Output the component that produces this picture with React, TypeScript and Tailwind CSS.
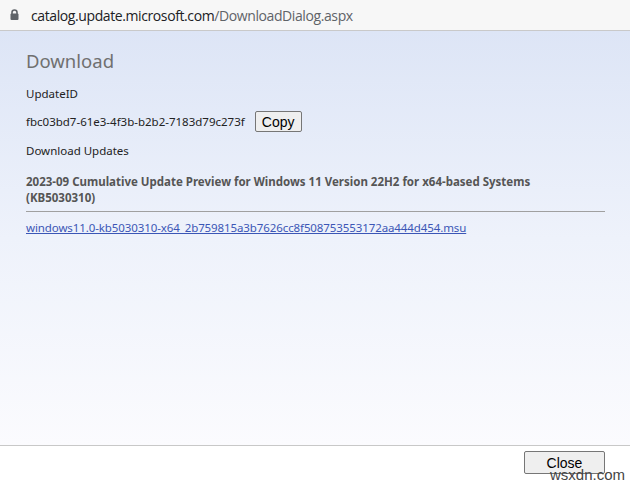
import React from "react";

export default function App() {
  const seg = { fontFamily: '"Noto Sans", "Open Sans", sans-serif' };
  return (
    <div className="w-[630px] h-[484px] flex flex-col overflow-hidden bg-white relative" style={seg}>
      <div className="h-[31px] shrink-0 flex items-center bg-[#f7f7f7] border-b border-[#c9c9c9] pl-[10px]">
        <svg width="9" height="11" viewBox="0 0 9 11" className="mr-[12px] mt-[-1px]">
          <path d="M2 5V3.5a2.5 2.5 0 0 1 5 0V5" fill="none" stroke="#5f6368" strokeWidth="1.6" />
          <rect x="0.5" y="4.5" width="8" height="6.5" rx="1" fill="#5f6368" />
        </svg>
        <span className="text-[14px] text-[#202124] tracking-[-0.4px]" style={{ fontFamily: '"Open Sans", "Noto Sans", sans-serif' }}>
          catalog.update.microsoft.com<span className="text-[#5f6368]">/DownloadDialog.aspx</span>
        </span>
      </div>
      <div className="flex-1 flex flex-col bg-gradient-to-b from-[#dde5f6] via-[#eef2fb] to-[#fbfbfe] px-[26px] pt-[17px]">
        <div className="text-[18.5px] leading-[26px] text-[#707070]">Download</div>
        <div className="text-[11.5px] leading-[16px] text-[#222] mt-[12px]">UpdateID</div>
        <div className="flex items-center mt-[9px]">
          <span className="text-[11.5px] leading-[16px] text-[#222]">fbc03bd7-61e3-4f3b-b2b2-7183d79c273f</span>
          <button
            className="ml-[10px] w-[47px] h-[21px] text-[14px] leading-[18px] text-black bg-[#efefef] border border-[#767676] rounded-[2px]"
            style={{ fontFamily: '"Liberation Sans", Arial, sans-serif' }}
          >
            Copy
          </button>
        </div>
        <div className="text-[11.5px] leading-[16px] text-[#222] mt-[11px]">Download Updates</div>
        <div className="text-[11.5px] leading-[16px] font-bold text-[#555] mt-[15px]">
          2023-09 Cumulative Update Preview for Windows 11 Version 22H2 for x64-based Systems
          <br />
          (KB5030310)
        </div>
        <div className="h-px bg-[#a0a0a0] mt-[5px] mr-[-1px]" />
        <a className="text-[11.5px] leading-[16px] tracking-[-0.1px] text-[#3b56b6] underline mt-[8px] self-start cursor-pointer">
          windows11.0-kb5030310-x64_2b759815a3b7626cc8f508753553172aa444d454.msu
        </a>
      </div>
      <div className="h-[39px] shrink-0 bg-white border-t border-[#c8c8c8] flex justify-end items-start pr-[25px] pt-[5px]">
        <button
          className="w-[81px] h-[23px] text-[14px] leading-[18px] text-black bg-[#efefef] border border-[#767676] rounded-[2px]"
          style={{ fontFamily: '"Liberation Sans", Arial, sans-serif' }}
        >
          Close
        </button>
      </div>
      <div className="absolute right-[5px] bottom-[1px] text-[15px] leading-[16px] text-[#444]" style={{ fontFamily: '"Liberation Sans", Arial, sans-serif' }}>
        wsxdn.com
      </div>
    </div>
  );
}
